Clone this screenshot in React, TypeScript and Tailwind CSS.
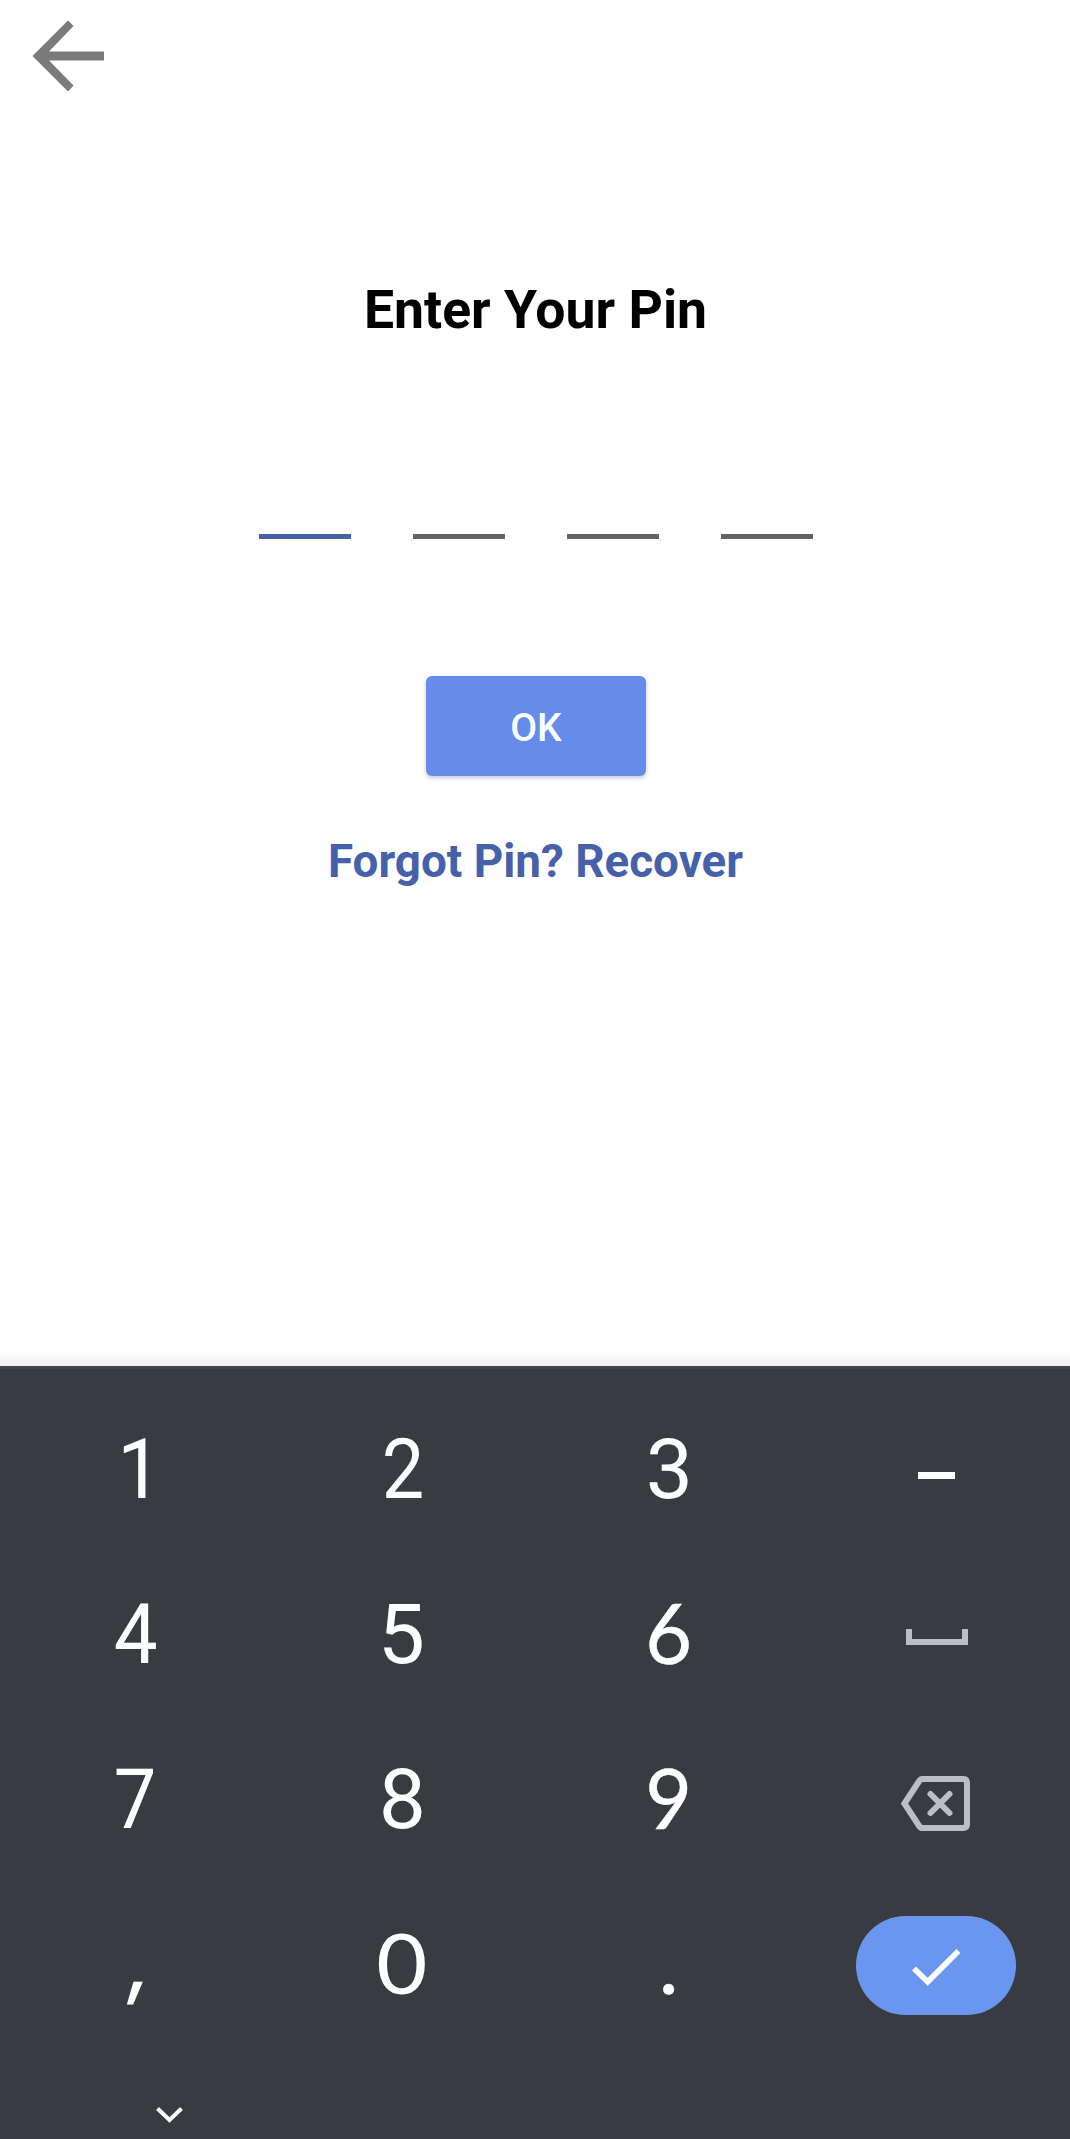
import type { ReactNode } from 'react';

function BackArrow() {
  return (
    <svg width="72" height="72" viewBox="0 0 72 72" fill="#7a7a7a" aria-hidden="true">
      <path d="M72 31.5V40.5H17L41.5 65.5L36 71.5L0.5 36L36 .5L41.5 6L17 31.5Z" />
    </svg>
  );
}

function SpaceIcon() {
  return (
    <svg width="62" height="16" viewBox="0 0 62 16" fill="none" stroke="#bdbec3" strokeWidth="6" aria-hidden="true">
      <path d="M3 0V13H59V0" />
    </svg>
  );
}

function BackspaceIcon() {
  return (
    <svg width="69" height="55" viewBox="0 0 69 55" fill="none" stroke="#bdbec3" strokeWidth="6" aria-hidden="true">
      <path d="M21.5 3H62Q66 3 66 7V48Q66 52 62 52H21.5Q19.5 52 18.2 50L3.5 27.5L18.2 5Q19.5 3 21.5 3Z" />
      <path d="M29.5 18L48.5 37M48.5 18L29.5 37" strokeLinecap="round" />
    </svg>
  );
}

function CheckIcon() {
  return (
    <svg width="49" height="37" viewBox="0 0 49 37" fill="none" stroke="#fbfeff" strokeWidth="5.6" aria-hidden="true">
      <path d="M2 19.5L15.7 32.8L46.5 2" />
    </svg>
  );
}

type KeyDef = { id: string; node: ReactNode; cls?: string };

const keys: KeyDef[] = [
  { id: '1', node: '1', cls: "font-['Roboto'] scale-x-[0.94] pl-[12px] pt-[2px]" },
  { id: '2', node: '2', cls: "font-['Roboto'] scale-x-[0.9] pl-[3px] pt-[2px]" },
  { id: '3', node: '3', cls: "font-['Roboto'] pl-[1px] pt-[2px]" },
  { id: 'minus', node: <span className="block h-[7px] w-[37px] bg-white" />, cls: 'pt-[14px]' },
  { id: '4', node: '4', cls: "font-['Roboto'] scale-x-[0.93] pl-1 pt-[2px]" },
  { id: '5', node: '5', cls: "font-['Roboto'] pt-[2px]" },
  { id: '6', node: '6', cls: 'scale-x-[0.96] pb-[4px] [-webkit-text-stroke:0.5px_white]' },
  { id: 'space', node: <SpaceIcon />, cls: 'pt-[7px] pl-px' },
  { id: '7', node: '7', cls: "font-['Roboto'] scale-x-[0.9] pl-[3px] pt-[2px]" },
  { id: '8', node: '8', cls: "font-['Roboto'] pl-[2px] pt-[2px]" },
  { id: '9', node: '9', cls: 'scale-x-[0.96] pb-[4px] [-webkit-text-stroke:0.5px_white]' },
  { id: 'del', node: <BackspaceIcon />, cls: 'pt-[10px] pr-[2px]' },
  { id: 'comma', node: <span className="inline-block -translate-y-[3px] -skew-x-[8deg]">,</span>, cls: "font-['Inter'] text-[80px] font-medium pl-[13px]" },
  { id: '0', node: '0', cls: 'scale-x-[1.05] pb-[4px]' },
  { id: 'period', node: '.', cls: 'pb-[3px] [-webkit-text-stroke:0.5px_white]' },
  {
    id: 'enter',
    node: (
      <span className="flex h-[99px] w-[160px] items-center justify-center rounded-[50px] bg-[#6b96ef] pt-[3px]">
        <CheckIcon />
      </span>
    ),
    cls: 'pt-[4px]',
  },
];

export default function App() {
  return (
    <div className="flex h-[2139px] w-[1070px] flex-col overflow-hidden bg-[#fefefe] font-['Roboto',sans-serif]">
      <main className="flex h-[1366px] flex-col items-center bg-gradient-to-b from-[#fefefe] from-[99%] to-[#f0f0f2]">
        <header className="flex h-[112px] w-full shrink-0 items-center pl-8">
          <button aria-label="Back"><BackArrow /></button>
        </header>
        <h1 className="mt-[166px] ml-px text-[53.5px] leading-[64px] font-bold text-black">Enter Your Pin</h1>
        <div className="mt-[192px] ml-[2px] flex gap-[62px]">
          <span className="h-[5px] w-[92px] bg-[#4860a8]" />
          <span className="h-[5px] w-[92px] bg-[#636363]" />
          <span className="h-[5px] w-[92px] bg-[#636363]" />
          <span className="h-[5px] w-[92px] bg-[#636363]" />
        </div>
        <button className="mt-[137px] ml-[2px] h-[100px] w-[220px] rounded-[6px] bg-[#658ce9] pt-[5px] text-[39px] font-medium text-[#fbfeff] shadow-[0_2px_4px_rgba(60,80,140,0.3)]">
          OK
        </button>
        <a className="mt-[56px] ml-px text-[45.8px] leading-[60px] font-bold text-[#4661aa]">Forgot Pin? Recover</a>
      </main>
      <section className="flex h-[773px] flex-col border-t-[3px] border-[#40464a] bg-[#383b40]">
        <div className="mt-[17px] grid grid-cols-4 grid-rows-[repeat(4,165px)] font-['Lato',sans-serif] text-[84px] leading-none text-white">
          {keys.map((k) => (
            <button key={k.id} className={`flex items-center justify-center ${k.cls ?? ''}`}>
              {k.node}
            </button>
          ))}
        </div>
        <button aria-label="Hide keyboard" className="mt-[61px] ml-[156px] w-[27px]">
          <svg width="27" height="16" viewBox="0 0 27 16" fill="none" stroke="#fff" strokeWidth="4" aria-hidden="true">
            <path d="M1.5 1.5L13.5 13L25.5 1.5" />
          </svg>
        </button>
      </section>
    </div>
  );
}
